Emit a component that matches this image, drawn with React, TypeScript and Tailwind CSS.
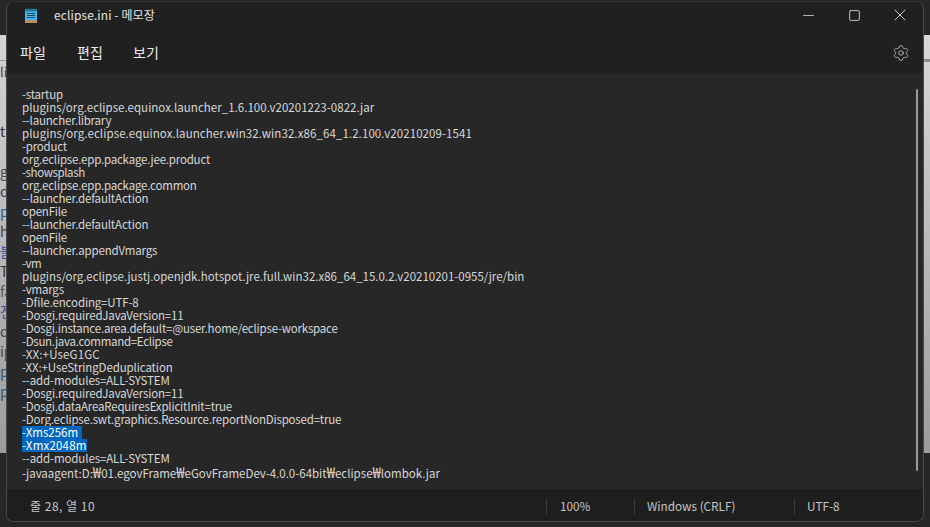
import { Minus, Settings, Square, X } from "lucide-react";

const lines: { t: string; c?: string }[] = [
  { t: "-startup" },
  { t: "plugins/org.eclipse.equinox.launcher_1.6.100.v20201223-0822.jar", c: "tracking-[0.03px]" },
  { t: "--launcher.library" },
  { t: "plugins/org.eclipse.equinox.launcher.win32.win32.x86_64_1.2.100.v20210209-1541", c: "tracking-[0.09px]" },
  { t: "-product" },
  { t: "org.eclipse.epp.package.jee.product" },
  { t: "-showsplash", c: "tracking-[-0.4px]" },
  { t: "org.eclipse.epp.package.common" },
  { t: "--launcher.defaultAction", c: "tracking-[-0.15px]" },
  { t: "openFile" },
  { t: "--launcher.defaultAction", c: "tracking-[-0.15px]" },
  { t: "openFile" },
  { t: "--launcher.appendVmargs", c: "tracking-[-0.15px]" },
  { t: "-vm", c: "tracking-[-0.4px]" },
  { t: "plugins/org.eclipse.justj.openjdk.hotspot.jre.full.win32.x86_64_15.0.2.v20210201-0955/jre/bin", c: "tracking-normal" },
  { t: "-vmargs" },
  { t: "-Dfile.encoding=UTF-8", c: "tracking-[-0.14px]" },
  { t: "-Dosgi.requiredJavaVersion=11", c: "tracking-[-0.17px]" },
  { t: "-Dosgi.instance.area.default=@user.home/eclipse-workspace" },
  { t: "-Dsun.java.command=Eclipse", c: "tracking-[-0.3px]" },
  { t: "-XX:+UseG1GC", c: "tracking-[0.15px]" },
  { t: "-XX:+UseStringDeduplication", c: "tracking-[-0.11px]" },
  { t: "--add-modules=ALL-SYSTEM", c: "tracking-[-0.12px]" },
  { t: "-Dosgi.requiredJavaVersion=11", c: "tracking-[-0.17px]" },
  { t: "-Dosgi.dataAreaRequiresExplicitInit=true", c: "tracking-[-0.18px]" },
  { t: "-Dorg.eclipse.swt.graphics.Resource.reportNonDisposed=true" },
];

// bits of the page behind the window that stick out on the left
const behind = [
  { text: "tu", color: "text-[#333333]" },
  { text: "", color: "" },
  { text: "g", color: "text-[#444444]" },
  { text: "d", color: "text-[#333366]" },
  { text: "p", color: "text-[#2a5a9a]" },
  { text: "hl", color: "text-[#444444]" },
  { text: "블", color: "text-[#2f4fb0]" },
  { text: "T", color: "text-[#333333]" },
  { text: "fa", color: "text-[#555555]" },
  { text: "전", color: "text-[#4a4a9a]" },
  { text: "op", color: "text-[#444444]" },
  { text: "ip", color: "text-[#444444]" },
  { text: "p", color: "text-[#335577]" },
  { text: "p", color: "text-[#335577]" },
];

function NotepadIcon() {
  return (
    <svg width="14" height="17" viewBox="0 0 14 17">
      <rect x="1" y="2" width="12" height="14" rx="1" fill="#3fb4e6" />
      <rect x="1" y="13.5" width="12" height="2.5" fill="#c98a4b" />
      <rect x="1" y="2" width="12" height="2" fill="#2b7fb8" />
      <path d="M3 4.8V1.2M5 4.8V1.2M7 4.8V1.2M9 4.8V1.2M11 4.8V1.2" stroke="#20627f" strokeWidth="0.8" />
      <path d="M3.2 6.5H10.8M3.2 8.5H10.8M3.2 10.5H10.8" stroke="#17435c" strokeWidth="1" />
    </svg>
  );
}

function Won() {
  return <span className="text-[15px] leading-[13px]">₩</span>;
}

export default function App() {
  return (
    <div className="relative h-[527px] w-[930px] overflow-hidden bg-[#262626] pl-[6px] pt-px font-['Noto_Sans_CJK_KR','Noto_Sans',sans-serif] text-[#d8d8d8]">
      {/* desktop behind the window */}
      <div className="absolute left-0 top-[35px] h-[418px] w-[6px] overflow-hidden bg-linear-to-b from-[#d4d4d4] to-[#9c9c9c]">
        <div className="mt-[25px] h-px bg-[#9a9a9a]" />
        <div className="flex h-[22px] items-center text-[13px] text-[#553366]">li</div>
        <div className="mt-[38px] flex flex-col">
          {behind.map((b, i) => (
            <div key={i} className={`flex h-[20px] items-center text-[14px] ${b.color}`}>
              {b.text}
            </div>
          ))}
        </div>
      </div>
      <div className="absolute right-0 top-[35px] h-[418px] w-[6px] bg-linear-to-b from-[#d8d8d8] to-[#9c9c9c]">
        <div className="mt-[24px] h-[3px] bg-[#8a8a8a]" />
      </div>

      <div className="relative flex h-[521px] w-[918px] flex-col overflow-hidden rounded-[8px] border border-[#4a4a4a] border-t-[#333333]">
        <div className="flex h-[30px] items-center bg-[#202020] pb-[4px] pl-[17px]">
          <NotepadIcon />
          <span className="ml-[16px] text-[12px] tracking-[0.1px] text-[#e4e4e4]">eclipse.ini - 메모장</span>
          <div className="ml-auto flex items-center text-[#f0f0f0]">
            <div className="flex w-[46px] justify-center">
              <Minus size={17} strokeWidth={1} />
            </div>
            <div className="flex w-[46px] justify-center">
              <Square size={13} strokeWidth={1.4} />
            </div>
            <div className="flex w-[46px] justify-center">
              <X size={20} strokeWidth={1} />
            </div>
          </div>
        </div>

        <div className="flex h-[41px] items-center bg-[#202020] pl-[13px] pr-[13px] text-[14px] text-[#ececec]">
          <span className="w-[57px]">파일</span>
          <span className="w-[56px]">편집</span>
          <span>보기</span>
          <Settings className="ml-auto text-[#cfcfcf]" size={18} strokeWidth={1} />
        </div>

        <div className="flex min-h-0 flex-1 bg-[#272727]">
          <div className="flex-1 overflow-hidden pl-[15px] pt-[15px] text-[11.5px] leading-[13px] tracking-[-0.2px] whitespace-pre">
            {lines.map((line, i) => (
              <div key={i} className={`h-[13px] ${line.c ?? ""}`}>
                {line.t}
              </div>
            ))}
            <div className="h-[13px] tracking-normal">
              <span className="inline-block w-[60px] bg-[#0067c0] text-white">-Xms256m</span>
            </div>
            <div className="h-[13px] tracking-[0.2px]">
              <span className="inline-block w-[65px] bg-[#0067c0] text-white">-Xmx2048m</span>
            </div>
            <div className="h-[13px] tracking-[-0.12px]">--add-modules=ALL-SYSTEM</div>
            <div className="h-[13px] tracking-normal">
              -javaagent:D:<Won />01.egovFrame<Won />eGovFrameDev-4.0.0-64bit<Won />eclipse<Won />lombok.jar
            </div>
          </div>
          <div className="mr-[5px] mt-[16px] h-[382px] w-[2px] rounded-full bg-[#9a9a9a]" />
        </div>

        <div className="flex h-[32px] items-center bg-[#1e1e1e] pt-[2px] text-[11.75px] text-[#c4c4c4]">
          <span className="w-[539px] pl-[23px] text-[12px] tracking-[0.5px]">줄 28, 열 10</span>
          <span className="h-[16px] w-px bg-[#3c3c3c]" />
          <span className="w-[87px] pl-[13px]">100%</span>
          <span className="h-[16px] w-px bg-[#3c3c3c]" />
          <span className="w-[159px] pl-[12px]">Windows (CRLF)</span>
          <span className="h-[16px] w-px bg-[#3c3c3c]" />
          <span className="pl-[12px]">UTF-8</span>
        </div>
      </div>
    </div>
  );
}
